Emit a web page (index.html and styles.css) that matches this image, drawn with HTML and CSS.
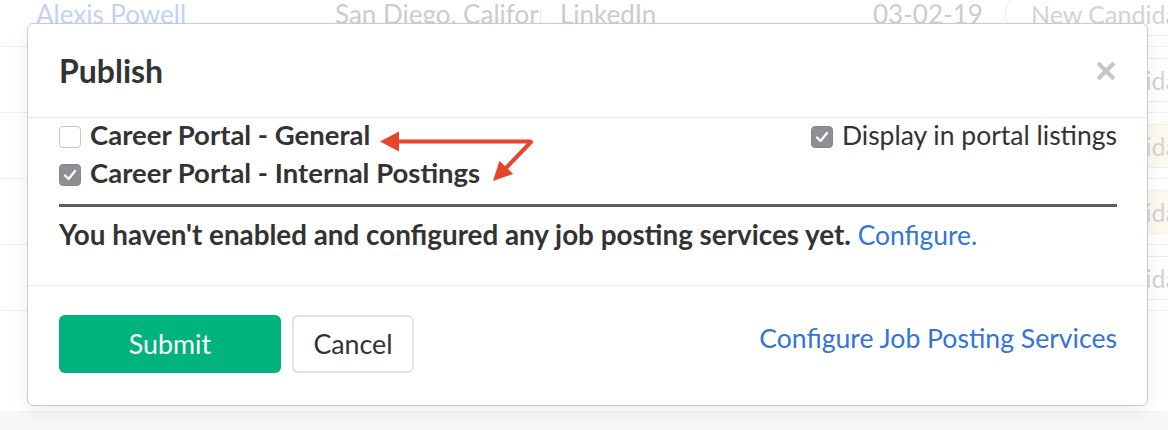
FILE: index.html
```html
<!DOCTYPE html>
<html lang="en">
<head>
<meta charset="utf-8">
<title>Publish</title>
<link rel="stylesheet" href="styles.css">
</head>
<body>
<div class="table">
  <div class="row">
    <span class="name">Alexis Powell</span>
    <span class="loc">San Diego, California</span>
    <span class="src">LinkedIn</span>
    <span class="date">03-02-19</span>
    <span class="stage"><span class="pill">New Candidate</span></span>
  </div>
  <div class="row">
    <span class="name"></span><span class="loc"></span><span class="src"></span><span class="date"></span>
    <span class="stage"><span class="pill">New Candidate</span></span>
  </div>
  <div class="row">
    <span class="name"></span><span class="loc"></span><span class="src"></span><span class="date"></span>
    <span class="stage"><span class="pill warn">New Candidate</span></span>
  </div>
  <div class="row">
    <span class="name"></span><span class="loc"></span><span class="src"></span><span class="date"></span>
    <span class="stage"><span class="pill warn">New Candidate</span></span>
  </div>
  <div class="row">
    <span class="name"></span><span class="loc"></span><span class="src"></span><span class="date"></span>
    <span class="stage"><span class="pill">New Candidate</span></span>
  </div>
</div>

<div class="modal">
  <div class="modal-head">
    <h2 class="title">Publish</h2>
    <span class="close" aria-label="Close">
      <svg width="18" height="18" viewBox="0 0 18 18"><path d="M2.5 2.5 L15.5 15.5 M15.5 2.5 L2.5 15.5" stroke="#c6c6c6" stroke-width="4.2" stroke-linecap="square"/></svg>
    </span>
  </div>
  <div class="modal-body">
    <div class="opts">
      <div class="checks">
        <label class="check"><span class="box"></span>Career Portal - General</label>
        <label class="check"><span class="box on"><svg width="22" height="22" viewBox="0 0 22 22"><path d="M6 11.5 L9.6 15 L16 7" fill="none" stroke="#fff" stroke-width="2.3" stroke-linecap="round" stroke-linejoin="round"/></svg></span>Career Portal - Internal Postings</label>
      </div>
      <label class="check display"><span class="box on"><svg width="22" height="22" viewBox="0 0 22 22"><path d="M6 11.5 L9.6 15 L16 7" fill="none" stroke="#fff" stroke-width="2.3" stroke-linecap="round" stroke-linejoin="round"/></svg></span>Display in portal listings</label>
    </div>
    <div class="rule"></div>
    <p class="msg">You haven't enabled and configured any job posting services yet. <a href="#">Configure.</a></p>
  </div>
  <div class="modal-foot">
    <button class="btn primary">Submit</button>
    <button class="btn secondary">Cancel</button>
    <a class="link" href="#">Configure Job Posting Services</a>
  </div>
</div>

<svg class="annot" width="165" height="65" viewBox="375 125 165 65">
  <g fill="#e8432b" stroke="#e8432b">
    <path d="M531 141.5 L396 141.5" stroke-width="4" fill="none"/>
    <polygon points="380,141.5 399,131.5 399,151.5" stroke="none"/>
    <path d="M531 142 L505 169" stroke-width="4" fill="none" stroke-linecap="round"/>
    <polygon points="493,181 513.1,174 499.5,160.8" stroke="none"/>
  </g>
</svg>
</body>
</html>
```
FILE: styles.css
```css
html, body {
  margin: 0;
  padding: 0;
}
body {
  position: relative;
  width: 1168px;
  height: 430px;
  overflow: hidden;
  background: #f7f7f7;
  font-family: "Lato", "Noto Sans", sans-serif;
  color: #333;
}

/* faded background table */
.table {
  margin-top: -19px;
  height: 430px;
  background: #fff;
}
.row {
  display: grid;
  grid-template-columns: 299px 225px 313px 132px 1fr;
  align-items: center;
  height: 65px;
  padding-left: 36px;
  border-bottom: 1px solid #efefef;
  font-size: 26px;
  color: #cdcdcd;
  white-space: nowrap;
}
.name { color: #c3d3f1; }
.loc { width: 206px; overflow: hidden; }
.stage { overflow: hidden; }
.pill {
  display: inline-flex;
  align-items: center;
  box-sizing: border-box;
  height: 44px;
  padding: 0 20px 0 25px;
  border: 1px solid #ececec;
  border-radius: 22px;
  color: #d4d4d4;
  font-size: 25px;
}
.pill.warn { background: #fdf9ef; border-color: #f6f1e4; }

/* modal */
.modal {
  position: absolute;
  left: 27px;
  top: 23px;
  width: 1121px;
  box-sizing: border-box;
  background: #fff;
  border: 1px solid #cbcbcb;
  border-radius: 6px;
  box-shadow: 0 6px 18px rgba(0, 0, 0, 0.07);
}
.modal-head {
  display: flex;
  justify-content: space-between;
  align-items: center;
  height: 93px;
  padding: 0 32px 0 31px;
  border-bottom: 1px solid #e9e9e9;
}
.title {
  margin: 0;
  font-size: 32px;
  font-weight: 700;
  color: #333;
}
.close { display: flex; }

.modal-body {
  padding: 0 30px 33px 31px;
  border-bottom: 1px solid #ebebeb;
}
.opts {
  display: flex;
  justify-content: space-between;
  align-items: flex-start;
}
.checks {
  display: flex;
  flex-direction: column;
  gap: 4px;
}
.check {
  display: flex;
  align-items: flex-start;
  gap: 9px;
  font-size: 27.5px;
  font-weight: 700;
  line-height: 34px;
  color: #333;
  white-space: nowrap;
}
.check.display {
  font-size: 26.5px;
  font-weight: 400;
}
.box {
  flex: none;
  width: 22px;
  height: 22px;
  margin-top: 8px;
  box-sizing: border-box;
  border: 1px solid #c6c6c6;
  border-radius: 4px;
  background: #fff;
  display: flex;
}
.box svg { margin: -1px; }
.box.on {
  background: #8e8e93;
  border-color: #86868b;
}
.rule {
  height: 3px;
  margin-top: 14px;
  background: #5e5e5e;
}
.msg {
  margin: 11px 0 0;
  font-size: 27.8px;
  font-weight: 700;
  line-height: 34px;
  color: #333;
  white-space: nowrap;
}
.msg a {
  font-size: 26.4px;
  font-weight: 400;
  color: #3374da;
  text-decoration: none;
}

.modal-foot {
  display: flex;
  align-items: flex-start;
  padding: 29px 30px 32px 31px;
}
.btn {
  height: 58px;
  box-sizing: border-box;
  border-radius: 6px;
  font-family: "Lato", "Noto Sans", sans-serif;
  font-size: 26.8px;
  font-weight: 400;
  padding: 0;
  cursor: pointer;
}
.btn.primary {
  width: 222px;
  background: #00b27b;
  border: none;
  color: #fff;
}
.btn.secondary {
  width: 122px;
  margin-left: 11px;
  background: #fff;
  border: 2px solid #e2e2e2;
  color: #333;
}
.link {
  margin-left: auto;
  margin-top: 6px;
  font-size: 26.6px;
  line-height: 34px;
  color: #3374da;
  text-decoration: none;
}

.annot {
  position: absolute;
  left: 375px;
  top: 125px;
  pointer-events: none;
}
```
